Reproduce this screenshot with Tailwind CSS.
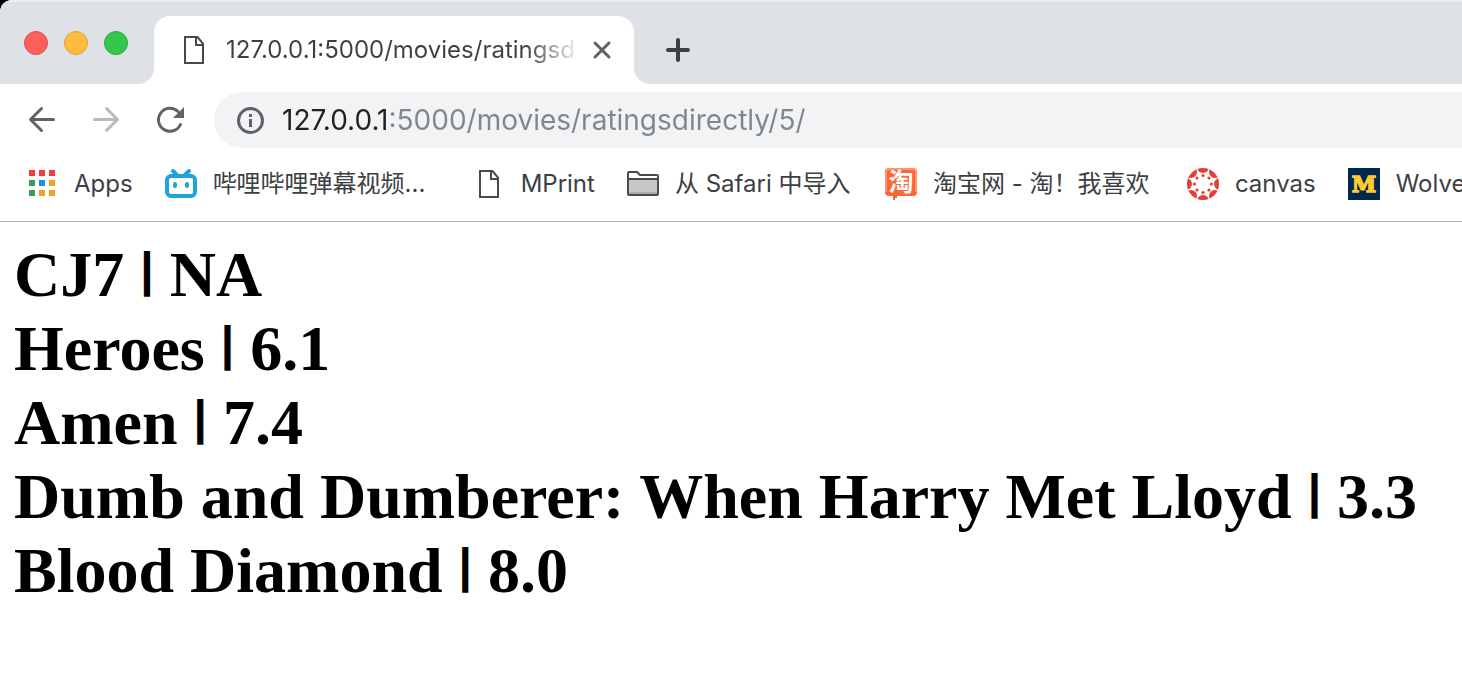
<!DOCTYPE html>
<html lang="en">
<head>
<meta charset="utf-8">
<meta name="viewport" content="width=device-width, initial-scale=1">
<title>127.0.0.1:5000/movies/ratingsdirectly/5/</title>
<script src="https://cdn.jsdelivr.net/npm/@tailwindcss/browser@4"></script>
</head>
<body class="bg-white font-['Inter','Noto_Sans_CJK_SC',sans-serif] text-[#3c4043] overflow-x-hidden">
<div class="bg-black">
  <header class="bg-white rounded-tl-xl overflow-hidden">
    <!-- Tab strip -->
    <div class="flex h-[84px]">
      <div class="w-[154px] shrink-0 bg-[#dee1e6] rounded-br-2xl border-t-2 border-[#eceef1] flex items-start gap-4 pt-[29px] pl-6">
        <button aria-label="Close window" class="size-6 rounded-full bg-[#fc605c] border border-[#e2504c]"></button>
        <button aria-label="Minimize window" class="size-6 rounded-full bg-[#fdbc40] border border-[#dfa032]"></button>
        <button aria-label="Zoom window" class="size-6 rounded-full bg-[#34c84a] border border-[#27aa35]"></button>
      </div>
      <div class="w-[480px] shrink-0 bg-[#dee1e6] border-t-2 border-[#eceef1] pt-[14px]">
        <div class="h-full bg-white rounded-t-2xl flex items-center pl-6 pr-5">
          <svg class="size-8 shrink-0" viewBox="0 0 32 32" fill="none" stroke="#4a4a4a" stroke-width="2"><path d="M7 3H19.500L25 9.500V29H7ZM18 3V11H25"/></svg>
          <span class="ml-4 flex-1 overflow-hidden whitespace-nowrap text-2xl leading-8 text-transparent bg-clip-text bg-[linear-gradient(to_right,#3c4043_86%,#3c404320)]">127.0.0.1:5000/movies/ratingsdirectly/5/</span>
          <button aria-label="Close tab" class="ml-4 shrink-0"><svg class="size-6" viewBox="0 0 24 24" fill="none" stroke="#5f6368" stroke-width="3" stroke-linecap="round"><path d="M5 5L19 19M19 5L5 19"/></svg></button>
        </div>
      </div>
      <div class="flex-1 bg-[#dee1e6] rounded-bl-2xl border-t-2 border-[#eceef1] pt-8 pl-7">
        <button aria-label="New tab" class="block"><svg class="size-8" viewBox="0 0 32 32" fill="none" stroke="#3c4043" stroke-width="4" stroke-linecap="round"><path d="M16 6V26M6 16H26"/></svg></button>
      </div>
    </div>
    <!-- Toolbar -->
    <div class="flex items-center h-[72px] pl-6">
      <button aria-label="Back" class="shrink-0"><svg class="size-9" viewBox="0 0 36 36" fill="none" stroke="#5f6368" stroke-width="3" stroke-linecap="round" stroke-linejoin="round"><path d="M29.500 17.500H7M17.500 6.500L6.500 17.500L17.500 28.500"/></svg></button>
      <button aria-label="Forward" class="ml-7 shrink-0"><svg class="size-9" viewBox="0 0 36 36" fill="none" stroke="#bababb" stroke-width="3" stroke-linecap="round" stroke-linejoin="round"><path d="M6.500 17.500H29M18.500 6.500L29.500 17.500L18.500 28.500"/></svg></button>
      <button aria-label="Reload" class="ml-7 shrink-0"><svg class="size-9" viewBox="0 0 36 36" fill="none" stroke="#5f6368" stroke-width="3" stroke-linecap="round"><path d="M28.500 22.500A11.500 11.500 0 1 1 26 9.500"/><path d="M32 5V16H21Z" fill="#5f6368" stroke="none"/></svg></button>
      <div class="ml-[26px] flex-1 h-14 rounded-l-full bg-[#f1f3f4] flex items-center pl-5">
        <svg class="size-8 shrink-0" viewBox="0 0 32 32" fill="none" stroke="#5f6368" stroke-width="3"><circle cx="16.500" cy="16.500" r="12"/><path d="M16.500 15V23M16.500 10V13"/></svg>
        <input type="text" aria-label="Address" value="127.0.0.1:5000/movies/ratingsdirectly/5/" class="ml-4 flex-1 min-w-0 h-14 text-[28px] outline-none text-transparent bg-clip-text bg-[linear-gradient(to_right,#202124_108px,#80868b_108px)]">
      </div>
    </div>
    <!-- Bookmarks -->
    <nav aria-label="Bookmarks" class="flex h-[66px] pb-[9px] pl-[26px] items-center gap-8 whitespace-nowrap text-2xl leading-8 border-b border-[#b3b3b3]">
      <a href="#" class="flex items-center gap-4 shrink-0">
        <svg class="size-8" viewBox="0 0 32 32"><path fill="#f43b3f" d="M3 2h6v6H3zM13 2h6v6h-6zM23 2h6v6h-6z"/><path fill="#349f5b" d="M3 12h6v6H3zM3 22h6v6H3z"/><path fill="#2b88f0" d="M13 12h6v6h-6z"/><path fill="#f2a027" d="M23 12h6v6h-6zM13 22h6v6h-6zM23 22h6v6h-6z"/></svg>
        Apps</a>
      <a href="#" class="flex items-center gap-4 shrink-0 w-[276px]">
        <svg class="size-8" viewBox="0 0 32 32" fill="none" stroke="#1fa3db" stroke-width="4" stroke-linecap="round"><rect x="2" y="8" width="28" height="20" rx="4"/><path d="M8 3L12 7M24 3L20 7M10 16V18M22 16V18"/></svg>
        哔哩哔哩弹幕视频...</a>
      <a href="#" class="flex items-center gap-4 shrink-0">
        <svg class="size-8" viewBox="0 0 32 32" fill="none" stroke="#4a4a4a" stroke-width="2"><path d="M7 3H19.500L25 9.500V29H7ZM18 3V11H25"/></svg>
        MPrint</a>
      <a href="#" class="flex items-center gap-4 shrink-0 w-[226px]">
        <svg class="size-8" viewBox="0 0 32 32"><path fill="#fff" stroke="#4a4a4a" stroke-width="2" stroke-linejoin="round" d="M1 26V5Q1 4 2 4H10L13 7H30Q31 7 31 8V26Q31 27 30 27H2Q1 27 1 26Z"/><path fill="#c8c8c8" d="M2 11H30V24H2Z"/><path fill="#adadad" d="M2 24H30V26H2Z"/><path stroke="#4a4a4a" stroke-width="2" d="M1 11H31"/></svg>
        从 Safari 中导入</a>
      <a href="#" class="flex items-center gap-4 shrink-0 w-[270px]">
        <svg class="size-8" viewBox="0 0 32 32"><path fill="#ff6434" d="M4 0H28Q32 0 32 4V24Q32 28 28 28H12V30H10V32H8V28H4Q0 28 0 24V4Q0 0 4 0Z"/><path fill="none" stroke="#ff9673" stroke-width="2" d="M1 24V4Q1 1 4 1H28Q31 1 31 4V24"/><text x="16" y="23" text-anchor="middle" font-family="Noto Sans CJK SC" font-weight="700" font-size="25" fill="#fff">淘</text></svg>
        淘宝网 - 淘！我喜欢</a>
      <a href="#" class="flex items-center gap-4 shrink-0">
        <svg class="size-8" viewBox="0 0 32 32" fill="#e63f36"><defs><clipPath id="disc"><circle cx="16" cy="16" r="16"/></clipPath></defs><g clip-path="url(#disc)"><circle cx="16" cy="-1" r="6"/><circle cx="28" cy="4" r="6"/><circle cx="33" cy="16" r="6"/><circle cx="28" cy="28" r="6"/><circle cx="16" cy="33" r="6"/><circle cx="4" cy="28" r="6"/><circle cx="-1" cy="16" r="6"/><circle cx="4" cy="4" r="6"/></g><circle cx="16" cy="7.500" r="1.600"/><circle cx="22" cy="10" r="1.600"/><circle cx="24.500" cy="16" r="1.600"/><circle cx="22" cy="22" r="1.600"/><circle cx="16" cy="24.500" r="1.600"/><circle cx="10" cy="22" r="1.600"/><circle cx="7.500" cy="16" r="1.600"/><circle cx="10" cy="10" r="1.600"/></svg>
        canvas</a>
      <a href="#" class="flex items-center gap-4 shrink-0">
        <svg class="size-8" viewBox="0 0 32 32"><path fill="#00274c" d="M0 0H32V32H0Z"/><text x="16" y="24" text-anchor="middle" font-family="DejaVu Serif" font-weight="700" font-size="22" fill="#ffcb2f" stroke="#ffcb2f" stroke-width="1.500">M</text></svg>
        Wolve</a>
    </nav>
  </header>
</div>
<main class="px-[14px] py-4 text-black">
  <h1 class="font-['Liberation_Serif',serif] font-bold text-[64px] leading-[74px]">CJ7 <span class="font-['Liberation_Sans'] text-5xl leading-none align-[10px]">|</span> NA<br>Heroes <span class="font-['Liberation_Sans'] text-5xl leading-none align-[10px]">|</span> 6.1<br>Amen <span class="font-['Liberation_Sans'] text-5xl leading-none align-[10px]">|</span> 7.4<br>Dumb and Dumberer: When Harry Met Lloyd <span class="font-['Liberation_Sans'] text-5xl leading-none align-[10px]">|</span> 3.3<br>Blood Diamond <span class="font-['Liberation_Sans'] text-5xl leading-none align-[10px]">|</span> 8.0</h1>
</main>
</body>
</html>
